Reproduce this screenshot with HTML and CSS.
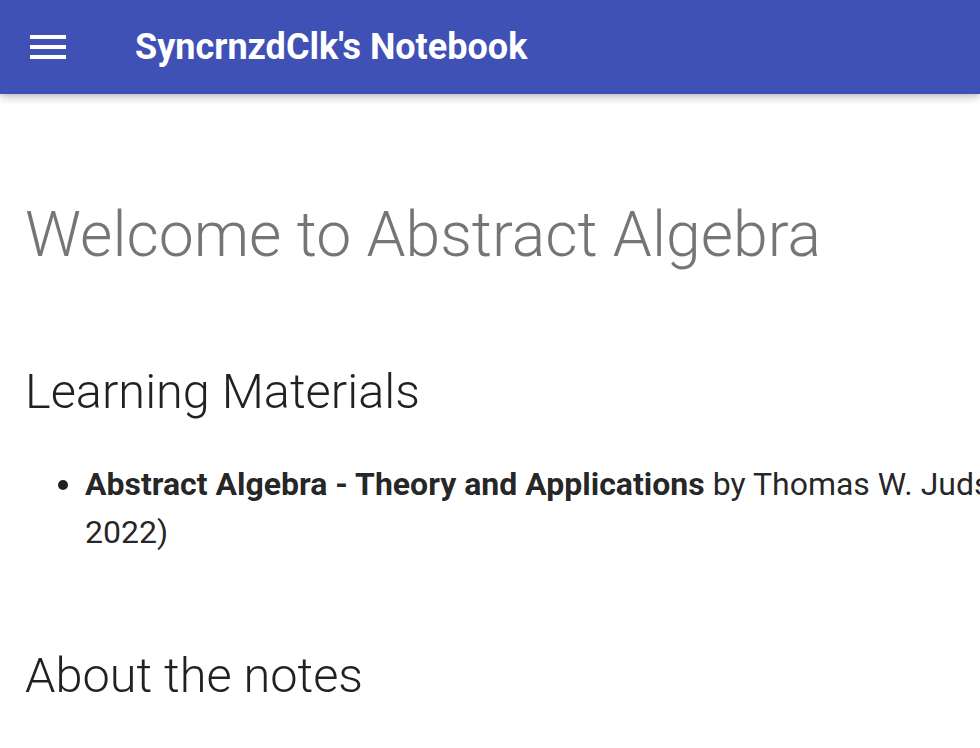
FILE: index.html
```html
<!DOCTYPE html>
<html lang="en">
<head>
<meta charset="utf-8">
<title>SyncrnzdClk's Notebook</title>
<link rel="stylesheet" href="styles.css">
</head>
<body>
<header class="header">
  <button class="menu-btn" aria-label="Menu">
    <svg viewBox="0 0 24 24" width="48" height="48"><path fill="#fff" d="M3 6h18v2H3V6m0 5h18v2H3v-2m0 5h18v2H3v-2z"/></svg>
  </button>
  <div class="header-title">SyncrnzdClk's Notebook</div>
</header>
<main class="content">
  <article class="typeset">
    <h1 class="title">Welcome to Abstract Algebra</h1>
    <h2 class="section">Learning Materials</h2>
    <ul class="list">
      <li><strong>Abstract Algebra - Theory and Applications</strong> by Thomas W. Judson (Annual Edition 2022)</li>
    </ul>
    <h2 class="section section-2">About the notes</h2>
  </article>
</main>
</body>
</html>
```
FILE: styles.css
```css
html, body {
  margin: 0;
  padding: 0;
  overflow: hidden;
  background: #fff;
}
body {
  font-family: Roboto, "Noto Sans", "Liberation Sans", sans-serif;
  color: rgba(0, 0, 0, 0.87);
  width: 980px;
  height: 748px;
}
.header {
  height: 94px;
  background: #3f51b5;
  display: flex;
  align-items: center;
  box-shadow: 0 0 4px rgba(0, 0, 0, 0.1), 0 4px 8px rgba(0, 0, 0, 0.2);
  position: relative;
  z-index: 1;
}
.menu-btn {
  margin: 0 0 0 24px;
  padding: 0;
  border: 0;
  background: none;
  width: 48px;
  height: 48px;
  display: block;
}
.menu-btn svg { display: block; }
.header-title {
  margin-left: 63px;
  color: #fff;
  font-size: 36px;
  font-weight: 700;
  white-space: nowrap;
}
.content {
  width: 1330px;
  padding: 0 25px;
  box-sizing: border-box;
}
.typeset {
  font-size: 32px;
  line-height: 48px;
}
.title {
  margin: 101px 0 0;
  font-size: 62.5px;
  line-height: 80px;
  font-weight: 300;
  color: rgba(0, 0, 0, 0.54);
}
.section {
  margin: 83px 0 0;
  font-size: 48.7px;
  line-height: 67px;
  font-weight: 300;
  color: rgba(0, 0, 0, 0.87);
}
.section-2 { margin-top: 86px; }
.list {
  margin: 35px 0 0;
  padding-left: 60px;
}
.list strong { font-weight: 700; }
```
